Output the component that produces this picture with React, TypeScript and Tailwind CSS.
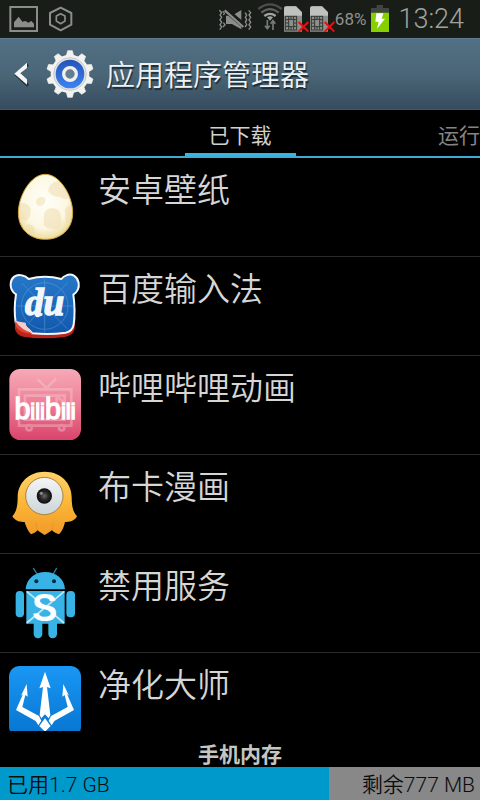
import type { ReactNode } from "react";

const StatusBar = () => (
  <div className="flex h-[38px] shrink-0 items-center bg-[#191d18] pr-4 pl-2 text-[#8f918e]">
    <svg viewBox="24 6 96 102" className="h-[34px] w-8" fill="none">
      <rect x="31" y="21" width="80" height="72" stroke="#8b8d8b" strokeWidth="6" />
      <path d="M42 82V67l14-17 11 15 9-2 9 5 9-5 8 8v11z" fill="#8b8d8b" />
    </svg>
    <svg viewBox="144 6 75 102" className="ml-2 h-[34px] w-[25px]" fill="none" stroke="#8b8d8b" strokeWidth="6" strokeLinejoin="round">
      <path d="M182 23l32 16v35l-32 17-32-17V39z" />
      <path d="M182 41l13 7v15l-13 8-13-8V48z" strokeWidth="5" />
    </svg>

    <div className="ml-auto flex items-center">
      <svg viewBox="15 6 102 102" className="h-[34px] w-[34px]" fill="none" stroke="#8b8d8b">
        <path d="M19 31l7 7-5 7 5 7-5 7 5 8-5 7 5 7-6 8M29 34l6 5-4 6M31 68l5 6-6 7" strokeWidth="4" />
        <path d="M107 31l6 7-5 7 5 7-5 7 5 8-5 7 5 7-6 8M96 38l5 7-4 7 4 7-4 8 4 7-5 7" strokeWidth="4" />
        <path d="M39 47h18l28-17v58L57 72H39z" fill="#8b8d8b" stroke="none" />
        <path d="M38 30l56 48" stroke="#191d18" strokeWidth="16" />
        <path d="M35 31l56 50" strokeWidth="7" />
      </svg>
      <svg viewBox="132 6 78 102" className="ml-[5px] h-[34px] w-[26px]" fill="none" strokeWidth="7">
        <path d="M136 27q35-28 70 0" stroke="#4b4e4c" />
        <path d="M145 38q26-21 52 0" stroke="#5e615e" />
        <path d="M154 48q17-13 34 0" stroke="#a0a3a0" />
        <path d="M162 52q9-6 18 0l-9 10z" fill="#a0a3a0" />
        <path d="M163 60v26M156 77l7 9 7-9M180 90V62M173 71l7-9 7 9" stroke="#777a77" strokeWidth="5" />
      </svg>
      <SimIcon />
      <SimIcon />
      <span className="text-[17px] leading-5">68%</span>
      <svg viewBox="480 6 60 102" className="ml-1 h-[34px] w-5">
        <path d="M500 15h19v9h18v14h-54V24h17z" fill="#414441" />
        <path d="M483 38h54v58h-54z" fill="#86d000" />
        <path d="M499 40h21l-5 16h10l-24 30 5-21h-10z" fill="#fff" />
      </svg>
      <span className="ml-2 text-[27px] leading-8 font-light text-[#a0a29f]">13:24</span>
    </div>
  </div>
);

const SimIcon = () => (
  <svg viewBox="216 6 78 102" className="h-[34px] w-[26px]" fill="none">
    <path d="M219 26q0-7 7-7h29l18 18v58h-54z" fill="#8c8f8c" />
    <path d="M219 26q0-7 7-7h29l18 18v10h-54z" fill="#bfc1bf" />
    <rect x="223" y="49" width="34" height="41" fill="#8c8f8c" stroke="#333633" strokeWidth="3" />
    <path d="M224 59h8M224 69h8M224 79h8M249 59h8M249 69h8M249 79h8M233 50v39M248 50v39M233 58h15M233 80h15M240 50v8M240 80v9" stroke="#333633" strokeWidth="3" />
    <path d="M263 66l29 29M292 66l-29 29" stroke="#e81010" strokeWidth="6" />
  </svg>
);

const teeth = [0, 36, 72, 108, 144, 180, 216, 252, 288, 324];

const Header = () => (
  <header className="flex h-[72px] shrink-0 items-center border-t border-b border-t-[#607d92] border-b-[#3f5862] bg-linear-to-b from-[#527085] via-[#4a6677] to-[#364c5e] pl-3">
    <button type="button" aria-label="返回" className="flex items-center">
      <svg viewBox="36 72 54 84" className="h-7 w-[18px]" fill="none">
        <path d="M82 82L48 114l34 32" stroke="#1f303b" strokeWidth="9" transform="translate(2 3)" />
        <path d="M81 80v16L61 112l20 18v16L43 113z" fill="#f4f6f7" />
      </svg>
    </button>
    <svg viewBox="138 41 144 144" className="ml-4 size-12" fill="none">
      <defs>
        <linearGradient id="gearBlue" x1="0" y1="0" x2="0" y2="1">
          <stop offset="0" stopColor="#2454b8" />
          <stop offset="1" stopColor="#3d83f2" />
        </linearGradient>
      </defs>
      {teeth.map((angle) => (
        <path key={angle} d="M198 62l5-19h14l5 19z" fill="#f2f2f0" stroke="#f2f2f0" strokeWidth="2" strokeLinejoin="round" transform={`rotate(${angle} 210 113)`} />
      ))}
      <circle cx="210" cy="113" r="58" fill="#f2f2f0" />
      <circle cx="210" cy="113" r="49" fill="#e5e5e3" stroke="#b7bbbd" strokeWidth="2" />
      <circle cx="210" cy="113" r="43" fill="url(#gearBlue)" />
      <circle cx="210" cy="113" r="19" fill="#637d91" stroke="#efefed" strokeWidth="10" />
    </svg>
    <h1 className="ml-3 pt-1 text-[29px] leading-9 font-[350] text-[#eef1f2] [text-shadow:1px_2px_1px_#1c2b35]">
      应用程序管理器
    </h1>
  </header>
);

const Tabs = () => (
  <nav className="flex h-12 shrink-0 items-end border-b-2 border-[#3faad2] text-[21px] leading-8">
    <div className="flex-1" />
    <button type="button" className="h-[43px] w-[111px] border-b-[3px] border-[#33b5e5] pt-1.5 text-[#d0d0d0]">
      已下载
    </button>
    <div className="flex flex-1 justify-end">
      <button type="button" className="h-[43px] border-b-[3px] border-transparent pt-1.5 text-[#858585]">
        运行
      </button>
    </div>
  </nav>
);

const EggIcon = () => (
  <svg viewBox="27 18 216 216" className="size-[72px] shrink-0">
    <defs>
      <radialGradient id="egg" cx=".48" cy=".42" r=".6">
        <stop offset="0" stopColor="#fffff8" />
        <stop offset=".65" stopColor="#fbf7e2" />
        <stop offset=".88" stopColor="#eee0a8" />
        <stop offset="1" stopColor="#d9b048" />
      </radialGradient>
      <clipPath id="eggShape">
        <path d="M136 28c45 0 82 67 82 115 0 50-36 80-82 80s-81-30-81-80c0-48 36-115 81-115z" />
      </clipPath>
    </defs>
    <g clipPath="url(#eggShape)">
      <rect x="50" y="20" width="175" height="210" fill="url(#egg)" />
      <g fill="#efdcb0" opacity=".55">
        <path d="M144 78q4-26 29-29 24 10 33 51-10 5-24-3-25-1-38-19z" />
        <path d="M108 107q3-11 18-11 12 1 10 11-3 15-18 16-11-4-10-16z" />
        <path d="M132 150q4-21 24-20 20 0 24 15 12 35-7 46-36 4-42-13z" />
        <path d="M50 116q30-8 41 14 3 27-13 38-20-3-28-17z" />
        <path d="M194 134q7-16 26-12v44q-18 11-22 5z" />
        <path d="M78 181q16-8 27 10l-3 20-22-14z" />
      </g>
    </g>
    <path d="M136 28c45 0 82 67 82 115 0 50-36 80-82 80s-81-30-81-80c0-48 36-115 81-115z" fill="none" stroke="#d5a83c" strokeWidth="3" />
  </svg>
);

const BaiduIcon = () => (
  <svg viewBox="27 18 216 216" className="size-[72px] shrink-0">
    <defs>
      <linearGradient id="bear" x1="0" y1="0" x2="0" y2="1">
        <stop offset="0" stopColor="#2678c8" />
        <stop offset="1" stopColor="#1258ad" />
      </linearGradient>
    </defs>
    <path d="M44 155l1 39q2 17 25 24 55 9 125 1 24-5 29-24l3-35z" fill="#bd2419" />
    <path
      d="M65 34c-16-5-32 7-33 25-1 15 6 26 16 32-4 25-5 58-1 84 17 2 38 18 50 33 35 3 72 2 100-2 15-3 22-12 24-25 4-29 3-61-1-89 12-8 18-21 16-35-3-19-20-30-37-23-8 3-12 7-15 11-30-8-68-8-98 0-5-5-12-9-21-11z"
      fill="url(#bear)"
      stroke="#f3f6fa"
      strokeWidth="6"
      strokeLinejoin="round"
    />
    <g stroke="#6aa8e2" strokeWidth="3" opacity=".45" fill="none">
      <path d="M134 45v160M52 126h172M66 58l137 137M203 56L84 178" />
      <circle cx="134" cy="126" r="70" />
    </g>
    <path d="M45 170q22 20 53 39-36 0-50-21z" fill="#e2473b" />
    <path d="M46 171q18 4 31 5-1 11 22 32-35-9-53-37z" fill="#f4cfc8" />
    <text x="134" y="152" textAnchor="middle" fill="#f2f6fa" stroke="#f2f6fa" strokeWidth="4" className="font-['Liberation_Serif',serif] text-[112px] font-bold italic">
      du
    </text>
    <path d="M104 141q6-12 12-5l-2 12q1 6 13 3-7 13-20 7z" fill="#f2f6fa" />
  </svg>
);

const BilibiliIcon = () => (
  <svg viewBox="27 21 216 216" className="size-[72px] shrink-0">
    <defs>
      <linearGradient id="pink" x1="0" y1="0" x2="0" y2="1">
        <stop offset="0" stopColor="#f6a9b6" />
        <stop offset=".45" stopColor="#ee8299" />
        <stop offset="1" stopColor="#d9446c" />
      </linearGradient>
    </defs>
    <rect x="28" y="21" width="215" height="213" rx="32" fill="url(#pink)" />
    <g fill="none" stroke="#fbd0d8" strokeWidth="8" opacity=".38">
      <path d="M57 82h157v109H57zM75 101h119v72H75zM113 52l30 30M168 50l-32 32" />
      <circle cx="87" cy="197" r="8" />
      <circle cx="185" cy="197" r="8" />
      <path d="M170 104l30 22-30 22z" />
    </g>
    <text x="135" y="170" textAnchor="middle" fill="#fff" stroke="#fff" strokeWidth="4" className="font-['Liberation_Sans',sans-serif] text-[66px]">
      <tspan className="text-[86px]">b</tspan>
      <tspan>ili</tspan>
      <tspan className="text-[86px]">b</tspan>
      <tspan>ili</tspan>
    </text>
  </svg>
);

const BukaIcon = () => (
  <svg viewBox="27 18 216 216" className="size-[72px] shrink-0">
    <defs>
      <linearGradient id="ghost" x1="0" y1="0" x2="0" y2="1">
        <stop offset="0" stopColor="#ffd36a" />
        <stop offset=".5" stopColor="#fbb637" />
        <stop offset="1" stopColor="#f09a28" />
      </linearGradient>
      <linearGradient id="eyeball" x1="0" y1="0" x2="0" y2="1">
        <stop offset="0" stopColor="#f4f5f6" />
        <stop offset="1" stopColor="#cbd5d8" />
      </linearGradient>
      <radialGradient id="pupil">
        <stop offset="0" stopColor="#6a6a6a" />
        <stop offset=".5" stopColor="#2b2b2b" />
        <stop offset="1" stopColor="#0c0c0c" />
      </radialGradient>
    </defs>
    <path
      d="M134 29C181 29 215 62 215 106C215 132 219 150 231 163C224 176 212 181 195 180C192 194 187 207 177 217C169 215 162 211 155 205C148 211 141 215 134 219C127 215 120 211 113 205C107 211 101 215 93 217C84 207 78 194 74 180C57 181 45 176 37 163C49 150 53 132 53 106C53 62 87 29 134 29z"
      fill="url(#ghost)"
    />
    <path d="M107 182l5 22M160 182l-4 22" stroke="#e08b1b" strokeWidth="3" opacity=".5" />
    <circle cx="133" cy="102" r="56" fill="url(#eyeball)" stroke="#a78242" strokeWidth="3" />
    <circle cx="133" cy="102" r="23" fill="url(#pupil)" />
    <circle cx="124" cy="94" r="5" fill="#8a8a8a" />
  </svg>
);

const DisableServiceIcon = () => (
  <svg viewBox="27 21 216 216" className="size-[72px] shrink-0" fill="#37b3e6">
    <path d="M111 42l-11-18M160 42l10-18" fill="none" stroke="#2388b0" strokeWidth="4" />
    <path d="M77 88c2-32 27-52 59-52s57 20 59 52z" />
    <circle cx="109" cy="64" r="6" fill="#062a3a" />
    <circle cx="162" cy="64" r="6" fill="#062a3a" />
    <rect x="47" y="93" width="25" height="79" rx="12" />
    <rect x="199" y="93" width="26" height="79" rx="12" />
    <path d="M79 93h115v98H79z" />
    <path d="M101 185h26v38q-2 12-13 12t-13-12zM145 185h26v38q-2 12-13 12t-13-12z" />
    <path d="M80 94l112 95M193 94L80 189" stroke="#bfe8f8" strokeWidth="5" />
    <text x="134" y="184" textAnchor="middle" fill="#fff" className="font-['Liberation_Sans',sans-serif] text-[114px] font-bold">
      S
    </text>
  </svg>
);

const CleanMasterIcon = () => (
  <svg viewBox="27 33 216 216" className="size-[72px] shrink-0">
    <defs>
      <linearGradient id="blue" x1="0" y1="0" x2="0" y2="1">
        <stop offset="0" stopColor="#1a97f5" />
        <stop offset="1" stopColor="#0674cf" />
      </linearGradient>
    </defs>
    <rect x="27" y="33" width="216" height="214" rx="32" fill="url(#blue)" />
    <g fill="#fff">
      <path d="M135 50L152 100L141 96L151 180L146 190L135 178L124 190L119 180L129 96L118 100z" />
      <path d="M80 87L83 125L76 120L67 156L117 183L124 197L115 211L107 198L48 165L69 117L63 122z" />
      <path d="M190 87L187 125L194 120L203 156L153 183L146 197L155 211L163 198L222 165L201 117L207 122z" />
      <path d="M135 190L152 213L135 230L118 213z" />
    </g>
  </svg>
);

const apps: { name: string; icon: ReactNode }[] = [
  { name: "安卓壁纸", icon: <EggIcon /> },
  { name: "百度输入法", icon: <BaiduIcon /> },
  { name: "哔哩哔哩动画", icon: <BilibiliIcon /> },
  { name: "布卡漫画", icon: <BukaIcon /> },
  { name: "禁用服务", icon: <DisableServiceIcon /> },
  { name: "净化大师", icon: <CleanMasterIcon /> },
];

const AppList = () => (
  <ul className="min-h-0 flex-1 overflow-hidden">
    {apps.map((app) => (
      <li key={app.name} className="flex h-[99px] gap-[17px] border-b border-[#2b2b2b] pt-[13px] pl-[9px]">
        {app.icon}
        <span className="text-[33px] leading-10 font-[350] text-[#d6d6d6]">{app.name}</span>
      </li>
    ))}
  </ul>
);

const usedMb = 1700;
const freeMb = 777;

const MemoryBar = () => (
  <footer className="shrink-0 text-[21px]">
    <h2 className="h-9 text-center leading-12 font-bold text-[#c4c6c2]">手机内存</h2>
    <div className="flex h-[33px] bg-[#888] leading-9 font-[350] text-[#0c0c0c]">
      <div className="bg-[#0099cc] pl-[7px]" style={{ width: `${(usedMb / (usedMb + freeMb)) * 100}%` }}>
        已用1.7 GB
      </div>
      <div className="flex-1 pr-[5px] text-right">剩余777 MB</div>
    </div>
  </footer>
);

const App = () => {
  return (
    <div lang="zh-CN" className="flex h-screen flex-col overflow-hidden bg-black font-[Roboto,'Noto_Sans_CJK_SC',sans-serif]">
      <StatusBar />
      <Header />
      <Tabs />
      <AppList />
      <MemoryBar />
    </div>
  );
};

export default App;
